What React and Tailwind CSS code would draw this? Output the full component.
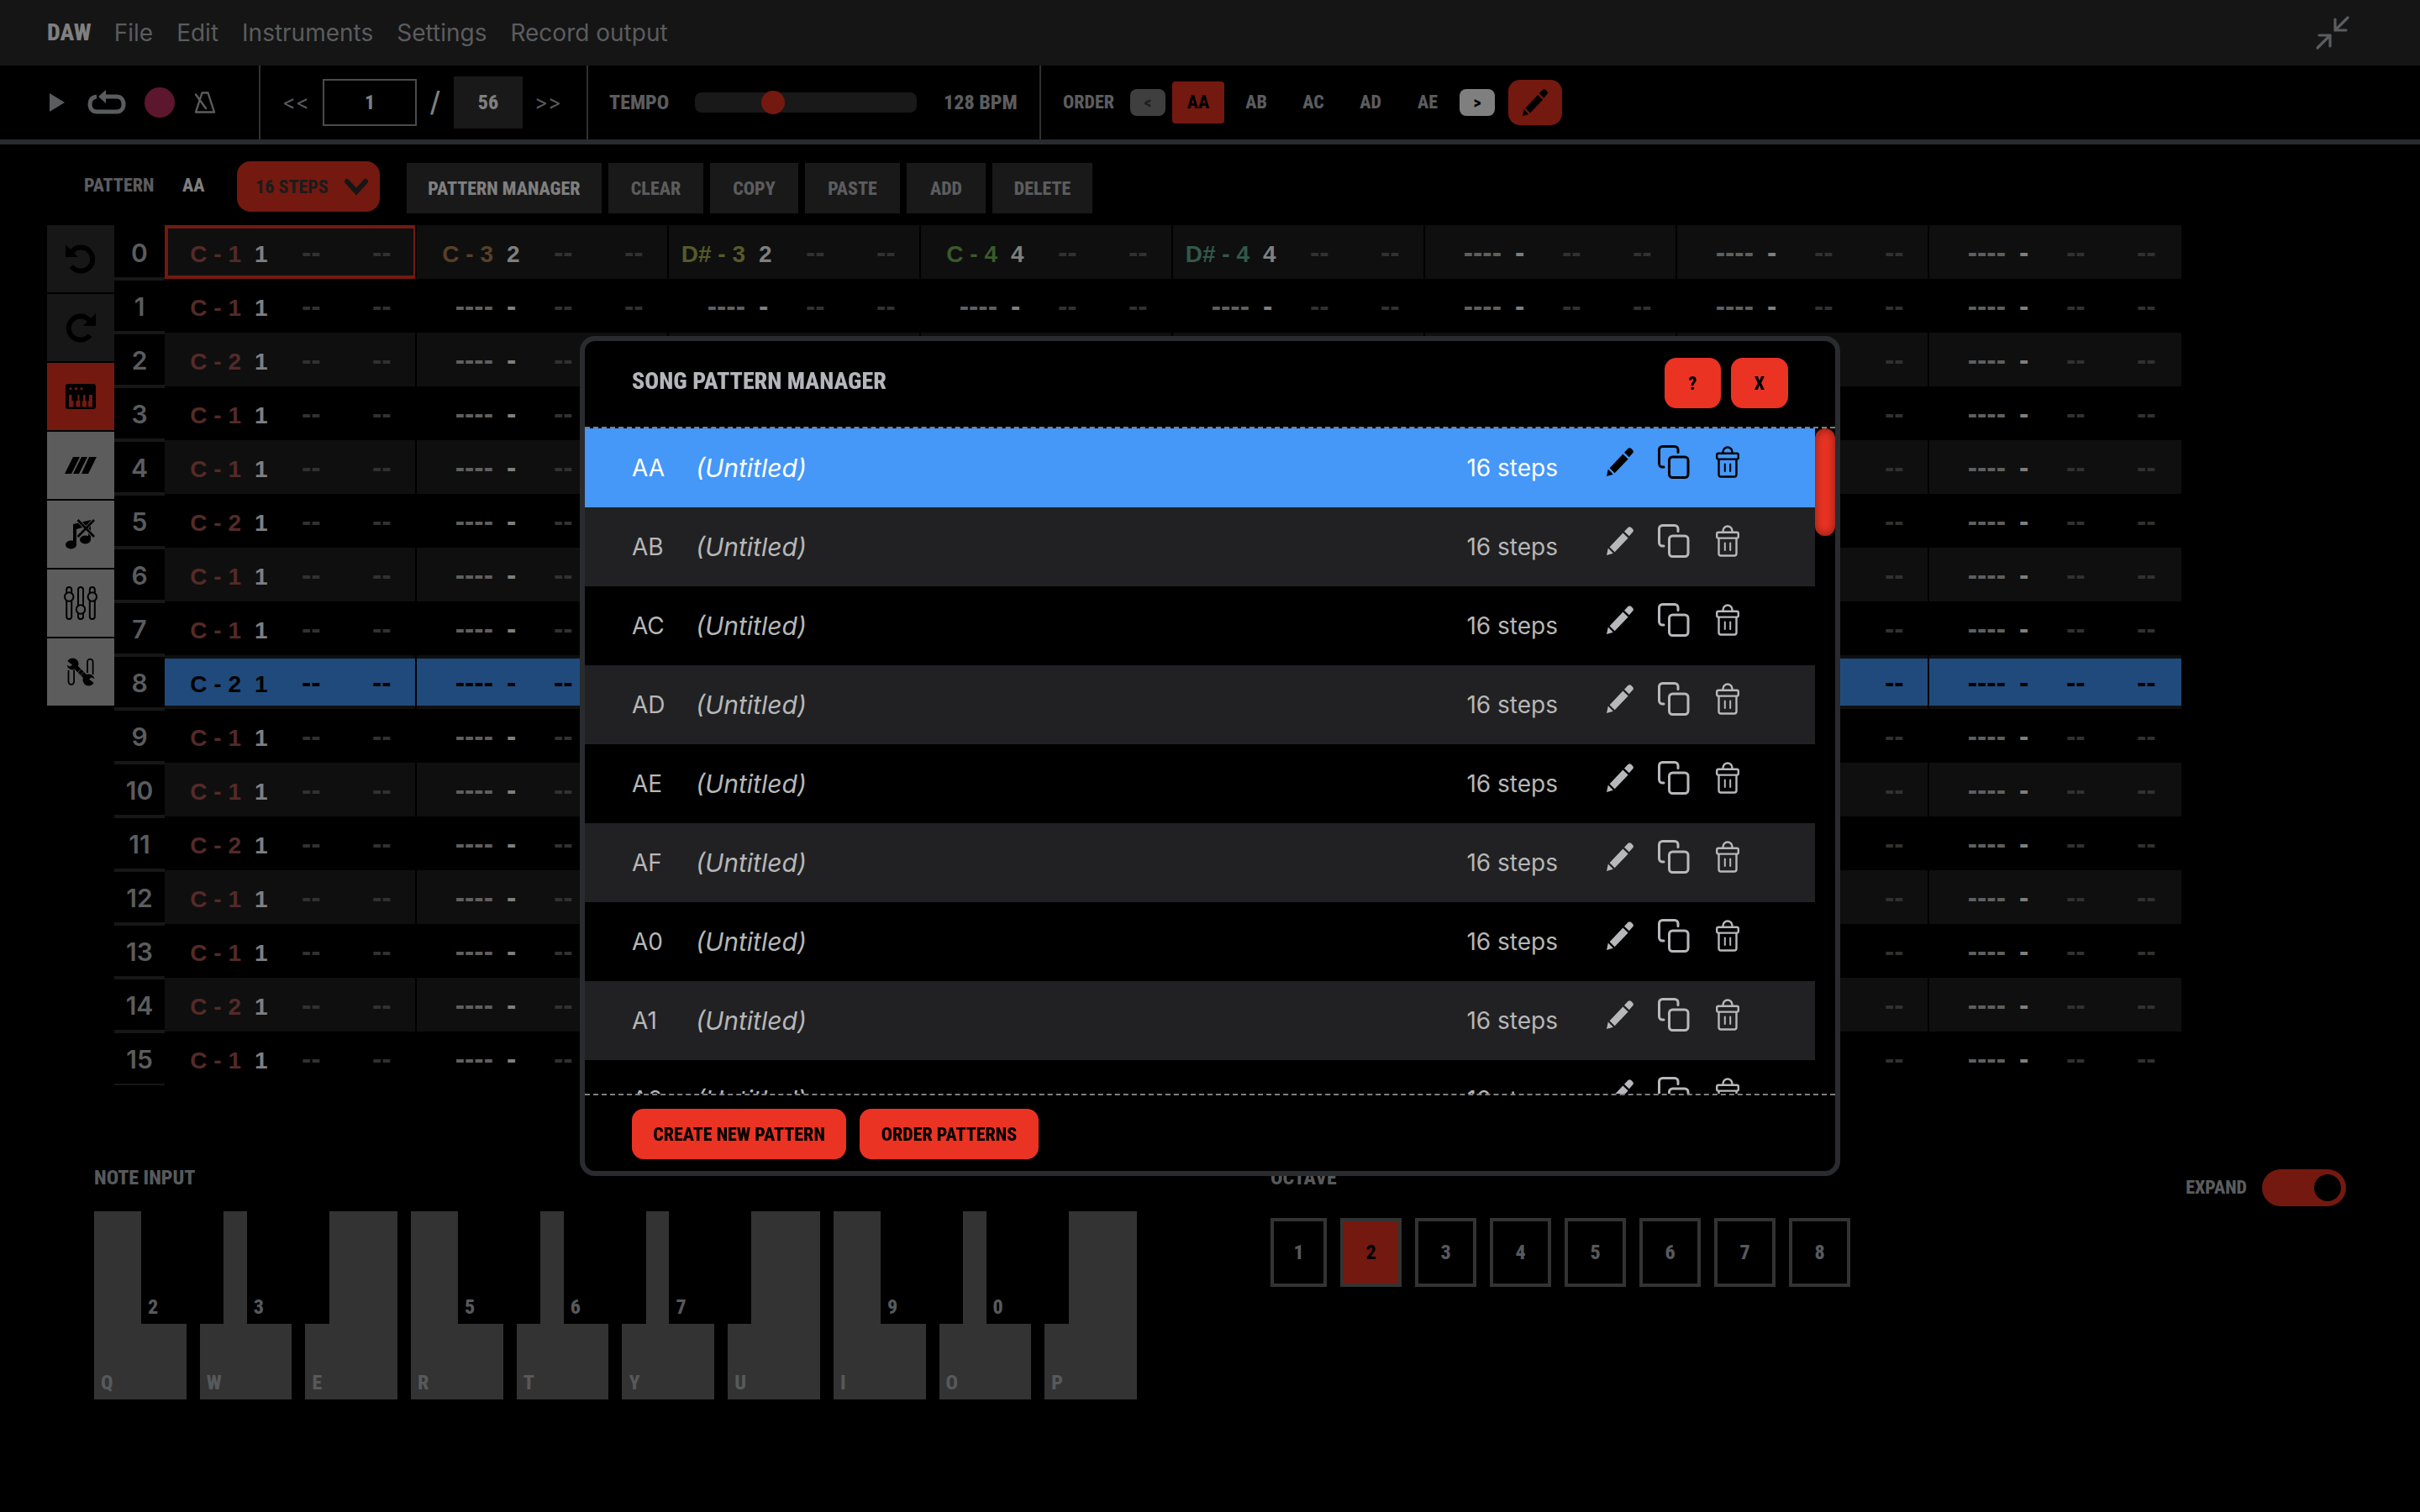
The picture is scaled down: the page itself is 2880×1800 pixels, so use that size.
import React from "react";

const DISPLAY = "font-['Roboto_Condensed','Liberation_Sans_Narrow','Liberation_Sans',sans-serif] font-extrabold";

/* ---------- icons ---------- */

function CollapseIcon() {
  return (
    <svg width="42" height="42" viewBox="0 0 42 42" fill="none" stroke="#5b5c5e" strokeWidth="3.2" strokeLinecap="round" strokeLinejoin="round" aria-hidden="true">
      <path d="M39 3 24 18M24 5v13h13" />
      <path d="M3 39 18 24M5 24h13v13" />
    </svg>
  );
}

function PlayIcon() {
  return (
    <svg width="20" height="24" viewBox="0 0 20 24" fill="#5b5c5e" aria-hidden="true">
      <path d="M1 1 19 12 1 23Z" />
    </svg>
  );
}

function LoopIcon() {
  return (
    <svg width="46" height="30" viewBox="0 0 46 30" fill="none" aria-hidden="true">
      <path d="M21 8h14c4.500 0 8 3.500 8 9s-3.500 9-8 9H11c-4.500 0-8-3.500-8-9 0-5 2.500-8.300 8-9" stroke="#5b5c5e" strokeWidth="5" />
      <path d="M13 8 22 0v5l1 3-1 2v6Z" fill="#5b5c5e" />
    </svg>
  );
}

function MetronomeIcon() {
  return (
    <svg width="26" height="26" viewBox="0 0 26 26" fill="none" stroke="#5b5c5e" strokeWidth="2.400" strokeLinejoin="round" strokeLinecap="round" aria-hidden="true">
      <path d="M2 24.500 9.500 1.500h7L24 24.500Z" />
      <path d="M2 3.500 14 20" />
    </svg>
  );
}

function PencilIcon({ className }) {
  return (
    <svg className={className} viewBox="0 0 32 34" fill="currentColor" aria-hidden="true">
      <path d="M0 34 1.800 25.600 7.800 31.800Z" />
      <path d="M3.600 24.200 19.400 7.400 25.600 13.600 9.600 30.300Z" />
      <path d="M21 5.700 25.400 1.100c1.200-1.300 2.600-1.300 3.900 0l1.700 1.700c1.200 1.300 1.200 2.500 0 3.800l-4.200 4.700Z" />
    </svg>
  );
}

function CopyIcon() {
  return (
    <svg width="38" height="40" viewBox="0 0 38 40" fill="none" stroke="currentColor" strokeWidth="3" strokeLinecap="round" aria-hidden="true">
      <path d="M24 8.500V5.500a4 4 0 0 0-4-4H5.500a4 4 0 0 0-4 4V22a4 4 0 0 0 4 4H7" />
      <rect x="13.500" y="14" width="22.500" height="24.500" rx="4" />
    </svg>
  );
}

function TrashIcon() {
  return (
    <svg width="28" height="38" viewBox="0 0 28 38" fill="none" stroke="currentColor" strokeWidth="2.400" strokeLinejoin="round" aria-hidden="true">
      <path d="M8.500 8.500V7a5.500 5.500 0 0 1 11 0v1.500" />
      <rect x="1.200" y="8.800" width="25.600" height="6.800" rx="1.800" />
      <path d="M3.500 15.800V34a2.500 2.500 0 0 0 2.500 2.500h16a2.500 2.500 0 0 0 2.500-2.500V15.800" />
      <path d="M10.800 21.500v8.500M17.200 21.500v8.500" strokeWidth="2" strokeLinecap="round" />
    </svg>
  );
}

function UndoIcon() {
  return (
    <svg width="38" height="38" viewBox="0 0 38 38" fill="none" aria-hidden="true">
      <path d="M9 10a14 14 0 1 1-1 18" stroke="#000" strokeWidth="6" />
      <path d="M1 2v15h15l-5-5 2-3-6-1Z" fill="#000" />
    </svg>
  );
}

function RedoIcon() {
  return (
    <svg width="38" height="38" viewBox="0 0 38 38" fill="none" aria-hidden="true">
      <path d="M29 10a14 14 0 1 0 1 18" stroke="#000" strokeWidth="6" />
      <path d="M37 2v15H22l5-5-2-3 6-1Z" fill="#000" />
    </svg>
  );
}

function KeyboardIcon() {
  return (
    <svg width="36" height="30" viewBox="0 0 36 30" aria-hidden="true">
      <rect width="36" height="30" rx="3" fill="#000" />
      <g fill="#741910">
        <rect x="4.500" y="4.500" width="3" height="2.500" />
        <rect x="11" y="4.500" width="3" height="2.500" />
        <rect x="17.500" y="4.500" width="3" height="2.500" />
        <path d="M4 13h3.500v7h2v7.500H4Z" />
        <path d="M12.500 20h2v-7h2v7h1v7.500h-5Z" />
        <path d="M20 20h1v-7h2.500v7h1.500v7.500h-5Z" />
        <path d="M28 13h4v14.500h-5V20h1Z" />
      </g>
    </svg>
  );
}

function SlashesIcon() {
  return (
    <svg width="38" height="20" viewBox="0 0 38 20" aria-hidden="true">
      <path d="M10 0h8L8 20H0ZM20 0h7L17 20h-7ZM29 0h9L28 20h-8Z" fill="#000" />
    </svg>
  );
}

function MutedNotesIcon() {
  return (
    <svg width="36" height="38" viewBox="0 0 36 38" aria-hidden="true">
      <ellipse cx="6.500" cy="31.500" rx="6.500" ry="5" />
      <ellipse cx="23.500" cy="25.500" rx="6.500" ry="5" />
      <path d="M9 7 30 2v24h-3V9l-14 4v19H9Z" />
      <path d="M14.500 2 34 22M34 2 14.500 22" stroke="#5c5c5c" strokeWidth="4.500" />
      <path d="M14.500 2 34 22M34 2 14.500 22" stroke="#000" strokeWidth="2.600" />
    </svg>
  );
}

function MixerIcon() {
  return (
    <svg width="40" height="42" viewBox="0 0 40 42" fill="none" stroke="#000" strokeWidth="2" aria-hidden="true">
      <rect x="3.200" y="2" width="6" height="38" rx="3" />
      <rect x="17" y="2" width="6" height="38" rx="3" />
      <rect x="30.800" y="2" width="6" height="38" rx="3" />
      <g fill="#5c5c5c">
        <circle cx="6.200" cy="13.500" r="5.200" />
        <circle cx="20" cy="28.500" r="5.200" />
        <circle cx="33.800" cy="13.500" r="5.200" />
      </g>
    </svg>
  );
}

function ToolsIcon() {
  return (
    <svg width="34" height="34" viewBox="0 0 34 34" fill="none" aria-hidden="true">
      <path d="M2.500 15v13.500a3.300 3.300 0 0 0 6.600 0V15M25 18V5a3.300 3.300 0 0 1 6.600 0v15" stroke="#000" strokeWidth="1.800" />
      <path d="M9 9 26 26" stroke="#000" strokeWidth="5.500" />
      <circle cx="7.500" cy="7.500" r="7" fill="#000" />
      <circle cx="26.500" cy="26.500" r="7" fill="#000" />
      <path d="M0 3 7 8.500 4 10.500-1 8ZM34 31 27 25.500 30 23.500 35 26Z" fill="#5c5c5c" />
      <path d="M13 18 18 13M16.500 21 21 16.500" stroke="#5c5c5c" strokeWidth="0.800" />
    </svg>
  );
}

function ChevronIcon() {
  return (
    <svg className="pointer-events-none absolute right-[13px] top-5" width="30" height="22" viewBox="0 0 30 22" fill="none" stroke="#161616" strokeWidth="6" strokeLinecap="round" aria-hidden="true">
      <path d="M4 4 15 16 26 4" strokeLinejoin="miter" />
    </svg>
  );
}

/* ---------- header ---------- */

function MenuBar() {
  return (
    <header className="flex h-[78px] items-center bg-[#151515] pl-14 pr-[83px] text-[28px] text-[#5b5c5e]">
      <h1 className={`${DISPLAY} mr-[27px] text-[28px] text-[#7f7f7f]`}>DAW</h1>
      <nav className="flex gap-7">
        {["File", "Edit", "Instruments", "Settings", "Record output"].map((item) => (
          <a key={item} href="#menu">{item}</a>
        ))}
      </nav>
      <button type="button" aria-label="Collapse window" className="ml-auto">
        <CollapseIcon />
      </button>
    </header>
  );
}

function Transport() {
  return (
    <section aria-label="Transport" className={`${DISPLAY} flex h-[94px] items-stretch border-b-[6px] border-[#2a2b2f] text-2xl text-[#5b5c5e]`}>
      <div className="flex w-[310px] items-center border-r-2 border-[#2f3032] pl-[58px]">
        <button type="button" aria-label="Play"><PlayIcon /></button>
        <button type="button" aria-label="Loop" className="ml-[26px]"><LoopIcon /></button>
        <button type="button" aria-label="Record" className="ml-[22px] size-9 rounded-full bg-[#5c172f]" />
        <button type="button" aria-label="Metronome" className="ml-[23px]"><MetronomeIcon /></button>
      </div>
      <div className="flex w-[390px] items-center border-r-2 border-[#2f3032] pl-[26px]">
        <button type="button" className="w-8 text-left font-['Inter',sans-serif] font-normal">&lt;&lt;</button>
        <input aria-label="Current measure" defaultValue="1" className="ml-4 h-14 w-28 border-2 border-[#4b4b4d] bg-black text-center text-[#7f7f7f]" />
        <span className="w-11 text-center text-[36px] font-medium text-[#7f7f7f]">/</span>
        <input aria-label="Total measures" defaultValue="56" className="h-[62px] w-[82px] bg-[#191919] text-center text-[#7f7f7f]" />
        <button type="button" className="ml-3.5 font-['Inter',sans-serif] font-normal">&gt;&gt;</button>
      </div>
      <div className="flex w-[539px] items-center border-r-2 border-[#2f3032] pl-[25px]">
        <label htmlFor="tempo" className="w-[102px]">TEMPO</label>
        <input
          id="tempo"
          type="range"
          min="0"
          max="1000"
          defaultValue="335"
          className="h-6 w-[264px] appearance-none rounded-lg bg-[#191919] [&::-webkit-slider-thumb]:size-7 [&::-webkit-slider-thumb]:appearance-none [&::-webkit-slider-thumb]:rounded-full [&::-webkit-slider-thumb]:bg-[#741910]"
        />
        <output className="ml-8 whitespace-nowrap">128 BPM</output>
      </div>
      <div className="flex items-center pl-[26px] text-[22px]">
        <span className="w-20">ORDER</span>
        <button type="button" aria-label="Previous order" className="h-8 w-[42px] rounded-lg bg-[#3f3f3f] text-xl leading-none text-[#1f1f1f]">&lt;</button>
        <button type="button" className="ml-2 h-[50px] w-[62px] rounded bg-[#741910] text-black">AA</button>
        {["AB", "AC", "AD", "AE"].map((name) => (
          <button key={name} type="button" className="ml-2 h-[50px] w-[60px]">{name}</button>
        ))}
        <button type="button" aria-label="Next order" className="ml-2 h-8 w-[42px] rounded-lg bg-[#7f7f7f] text-xl leading-none text-black">&gt;</button>
        <button type="button" aria-label="Edit order" className="ml-4 flex h-[54px] w-16 items-center justify-center rounded-[14px] bg-[#741910] text-black">
          <PencilIcon className="h-8 w-8" />
        </button>
      </div>
    </section>
  );
}

function PatternToolbar() {
  return (
    <div className={`${DISPLAY} flex items-start pl-[100px] pt-5 text-[22px] text-[#5b5c5e]`}>
      <span className="mt-3 w-[117px]">PATTERN</span>
      <span className="mt-3 w-[65px] text-[#7f7f7f]">AA</span>
      <div className="relative">
        <select aria-label="Steps" className="h-[60px] w-[170px] appearance-none rounded-2xl bg-[#741910] pl-[22px] text-[#1c1c1c]">
          <option>16 STEPS</option>
        </select>
        <ChevronIcon />
      </div>
      <div className="ml-8 mt-0.5 flex gap-2">
        <button type="button" className="h-[60px] w-[232px] bg-[#191919] text-[#7f7f7f]">PATTERN MANAGER</button>
        <button type="button" className="h-[60px] w-[113px] bg-[#191919]">CLEAR</button>
        <button type="button" className="h-[60px] w-[105px] bg-[#191919]">COPY</button>
        <button type="button" className="h-[60px] w-[113px] bg-[#191919]">PASTE</button>
        <button type="button" className="h-[60px] w-[94px] bg-[#191919]">ADD</button>
        <button type="button" className="h-[60px] w-[119px] bg-[#191919]">DELETE</button>
      </div>
    </div>
  );
}

/* ---------- pattern grid ---------- */

const SIDE_TOOLS = [
  { label: "Undo", Icon: UndoIcon, tone: "bg-[#171717]" },
  { label: "Redo", Icon: RedoIcon, tone: "bg-[#171717]" },
  { label: "Note entry", Icon: KeyboardIcon, tone: "bg-[#741910]" },
  { label: "Glide", Icon: SlashesIcon, tone: "bg-[#5c5c5c]" },
  { label: "Note off", Icon: MutedNotesIcon, tone: "bg-[#5c5c5c]" },
  { label: "Mixer", Icon: MixerIcon, tone: "bg-[#5c5c5c]" },
  { label: "Tools", Icon: ToolsIcon, tone: "bg-[#5c5c5c]" },
];

const BASS = [1, 1, 2, 1, 1, 2, 1, 1, 2, 1, 1, 2, 1, 1, 2, 1];
const FIRST_ROW = [
  null,
  { note: "C - 3", inst: "2", color: "text-[#574029]" },
  { note: "D# - 3", inst: "2", color: "text-[#555a2b]" },
  { note: "C - 4", inst: "4", color: "text-[#3a5a2b]" },
  { note: "D# - 4", inst: "4", color: "text-[#32584b]" },
];

function cellData(row, col) {
  if (col === 0) return { note: `C - ${BASS[row]}`, inst: "1", color: "text-[#542a28]" };
  return (row === 0 && FIRST_ROW[col]) || null;
}

function GridCell({ row, col }) {
  const data = cellData(row, col);
  const playing = row === 8;
  const focused = row === 0 && col === 0;
  const stripe = row % 2 === 0 ? "bg-[#0f0f0f]" : "bg-black";
  const dim = playing ? "text-black" : "text-[#313131]";
  return (
    <td className={`h-16 p-0 ${stripe} ${col < 7 ? "border-r-2 border-black" : ""}`}>
      <div
        className={`flex items-center ${focused ? "h-16 border-4 border-r-2 border-[#741910]" : playing ? "my-1 h-14 bg-[#204a7b]" : "h-16"}`}
      >
        <div className={`flex items-baseline text-[28px] leading-none font-bold ${focused ? "-ml-1" : ""}`}>
          {data ? (
            <span className={`w-[91px] text-right whitespace-nowrap ${playing ? "text-black" : data.color}`}>{data.note}</span>
          ) : (
            <span className={`w-[91px] text-right text-[34px] leading-none ${playing ? "text-black" : "text-[#5f5f5f]"}`}>----</span>
          )}
          <span className={`ml-4 w-14 ${playing ? "text-black" : "text-[#7f7f7f]"} ${data ? "" : "text-[34px] leading-none"}`}>
            {data ? data.inst : "-"}
          </span>
          <span className={`w-[84px] text-[34px] leading-none ${dim}`}>--</span>
          <span className={`text-[34px] leading-none ${dim}`}>--</span>
        </div>
      </div>
    </td>
  );
}

function PatternGrid() {
  return (
    <div className="mt-3.5 flex items-start pl-14">
      <div className="flex w-20 flex-col gap-0.5">
        {SIDE_TOOLS.map(({ label, Icon, tone }) => (
          <button key={label} type="button" aria-label={label} className={`flex size-20 items-center justify-center ${tone}`}>
            <Icon />
          </button>
        ))}
      </div>
      <table className="w-[2460px] table-fixed border-separate border-spacing-0 font-['Liberation_Sans',sans-serif]">
        <colgroup>
          <col className="w-[60px]" />
        </colgroup>
        <tbody>
          {BASS.map((_, row) => (
            <tr key={row}>
              <th scope="row" className="p-0 font-['Inter',sans-serif] text-[30px] font-semibold text-[#5b5c5e]">
                <div className={`flex h-16 items-center justify-center border-y-2 border-b-[#171717] pt-0.5 ${row ? "border-t-[#171717]" : "border-t-transparent"}`}>
                  {row}
                </div>
              </th>
              {Array.from({ length: 8 }, (_, col) => (
                <GridCell key={col} row={row} col={col} />
              ))}
            </tr>
          ))}
        </tbody>
      </table>
    </div>
  );
}

/* ---------- keyboard and octaves ---------- */

const KEYS = [
  ["Q", "2"], ["W", "3"], ["E"], ["R", "5"], ["T", "6"],
  ["Y", "7"], ["U"], ["I", "9"], ["O", "0"], ["P"],
];

function BottomPanel() {
  return (
    <section className={`${DISPLAY} mt-[94px] flex items-start pl-28 pr-[88px] text-2xl text-[#57595b]`}>
      <div>
        <h2 className="leading-8">NOTE INPUT</h2>
        <div className="mt-6 grid w-[1241px] grid-cols-10 gap-4">
          {KEYS.map(([white, black]) => (
            <div key={white} className="relative">
              <button type="button" className="flex h-56 w-full items-end bg-[#333333] px-2 pb-1">{white}</button>
              {black && (
                <button type="button" className="absolute left-14 top-0 z-10 flex h-[134px] w-[98px] items-end bg-black px-2 pb-1">{black}</button>
              )}
            </div>
          ))}
        </div>
      </div>
      <div className="ml-[159px]">
        <h2 className="leading-8">OCTAVE</h2>
        <div className="mt-8 flex gap-4">
          {[1, 2, 3, 4, 5, 6, 7, 8].map((n) => (
            <button
              key={n}
              type="button"
              className={`h-[82px] border-4 border-[#333333] ${n === 1 ? "w-[67px]" : "w-[73px]"} ${n === 2 ? "bg-[#741910] text-black" : ""}`}
            >
              {n}
            </button>
          ))}
        </div>
      </div>
      <label className="ml-auto mt-1.5 flex items-center gap-[18px] text-[22px] text-[#5b5c5e]">
        EXPAND
        <input
          type="checkbox"
          defaultChecked
          className="relative h-11 w-[100px] appearance-none rounded-full bg-[#741910] before:absolute before:right-1.5 before:top-1.5 before:size-8 before:rounded-full before:bg-black before:content-['']"
        />
      </label>
    </section>
  );
}

/* ---------- dialog ---------- */

const PATTERNS = ["AA", "AB", "AC", "AD", "AE", "AF", "A0", "A1", "A2"];

function PatternRow({ name, index }) {
  const active = index === 0;
  const tone = active
    ? "bg-[#4597f8] text-white"
    : index % 2
      ? "bg-[#212123] text-[#b7b7b7]"
      : "bg-black text-[#b7b7b7]";
  return (
    <li className={`flex h-[94px] shrink-0 items-center pl-14 pr-[90px] text-[28px] ${tone}`}>
      <span className="w-[76px]">{name}</span>
      <em className="text-[30px]">(Untitled)</em>
      <span className="ml-auto whitespace-nowrap">16 steps</span>
      <span className={`-mt-3.5 ml-[58px] flex items-center ${active ? "text-black" : "text-[#b7b8bb]"}`}>
        <button type="button" aria-label={`Edit ${name}`}><PencilIcon className="h-[34px] w-8" /></button>
        <button type="button" aria-label={`Duplicate ${name}`} className="ml-[29px]"><CopyIcon /></button>
        <button type="button" aria-label={`Delete ${name}`} className="ml-[31px]"><TrashIcon /></button>
      </span>
    </li>
  );
}

function PatternManager() {
  return (
    <div className="fixed inset-0 z-20 flex items-center justify-center">
      <div role="dialog" aria-modal="true" aria-labelledby="manager-title" className="flex h-[1000px] max-h-full w-[1500px] max-w-full flex-col overflow-hidden rounded-[18px] border-[6px] border-[#2a2b2f] bg-black">
        <div className={`${DISPLAY} flex h-[104px] shrink-0 items-center border-b-2 border-dashed border-[#7f7f7f] px-14 pb-0.5`}>
          <h2 id="manager-title" className="pb-1 text-[28px] text-[#b4b6ba]">SONG PATTERN MANAGER</h2>
          <button type="button" aria-label="Help" className="ml-auto h-[60px] w-[67px] rounded-[14px] bg-[#ea3323] text-[22px] text-black">?</button>
          <button type="button" aria-label="Close" className="ml-3 h-[60px] w-[68px] rounded-[14px] bg-[#ea3323] text-[22px] text-black">X</button>
        </div>
        <div className="flex min-h-0 flex-1">
          <ul className="flex flex-1 flex-col overflow-hidden">
            {PATTERNS.map((name, index) => (
              <PatternRow key={name} name={name} index={index} />
            ))}
          </ul>
          <div className="w-6">
            <div className="h-32 rounded-full bg-[#ea3323] shadow-[inset_0_0_12px_rgba(0,0,0,0.45)]" />
          </div>
        </div>
        <div className={`${DISPLAY} flex h-[92px] shrink-0 gap-4 border-t-2 border-dashed border-[#7f7f7f] pl-14 pt-4 text-[22px]`}>
          <button type="button" className="h-[60px] w-[255px] rounded-[14px] bg-[#ea3323] text-black">CREATE NEW PATTERN</button>
          <button type="button" className="h-[60px] w-[213px] rounded-[14px] bg-[#ea3323] text-black">ORDER PATTERNS</button>
        </div>
      </div>
    </div>
  );
}

export default function App() {
  return (
    <div className="min-h-screen bg-black font-['Inter',sans-serif]">
      <MenuBar />
      <Transport />
      <main>
        <PatternToolbar />
        <PatternGrid />
        <BottomPanel />
      </main>
      <PatternManager />
    </div>
  );
}
